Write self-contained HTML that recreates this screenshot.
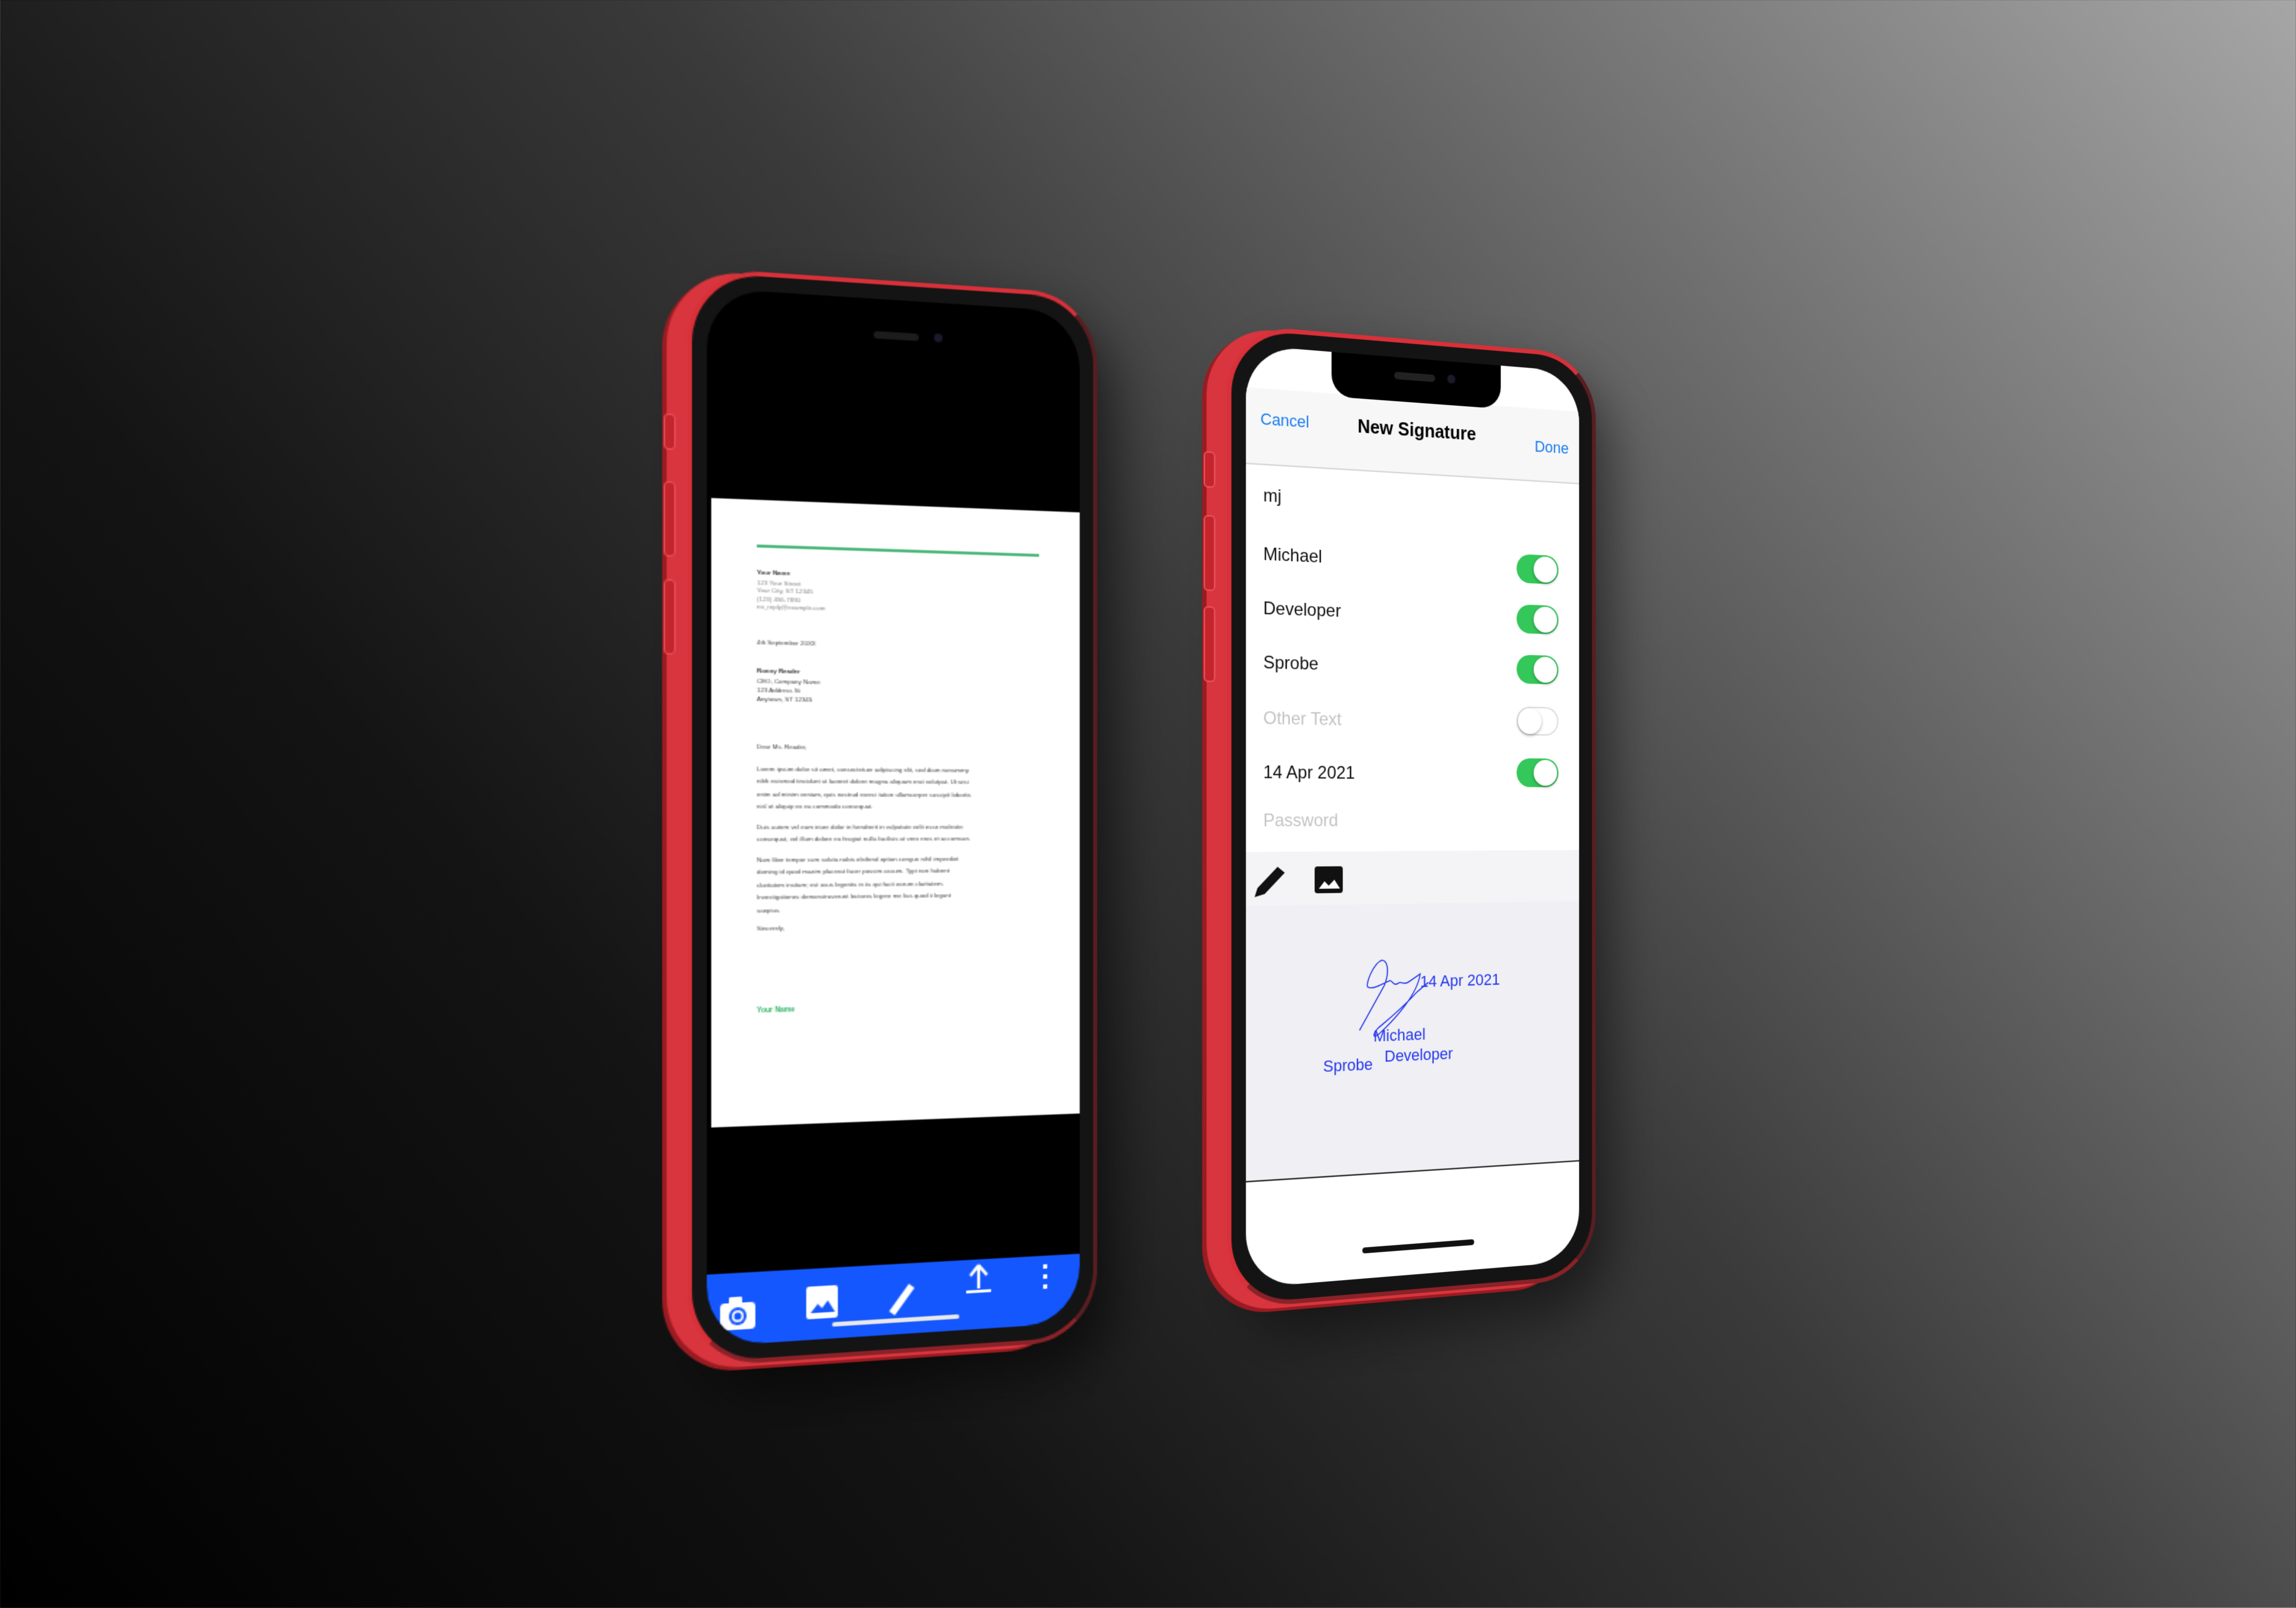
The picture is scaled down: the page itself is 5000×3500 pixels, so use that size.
<!DOCTYPE html>
<html><head><meta charset="utf-8">
<style>
html,body{margin:0;padding:0;width:5000px;height:3500px;overflow:hidden}
body{background:linear-gradient(50deg,#000 0%,#141414 30%,#3a3a3a 55%,#6a6a6a 75%,#a6a6a6 100%);font-family:"Liberation Sans",sans-serif}
#w{position:absolute;left:0;top:0;width:1568px;height:1098px;transform:scale(3.18878);transform-origin:0 0}
.phone{position:absolute;box-sizing:border-box;border:3px solid #d93039;border-right-color:#5a1d21;border-bottom-color:#8a2228;background:#141414;border-radius:50px;padding:10px}
.btn{position:absolute;left:-19px;width:6px;background:#c4242c;border-radius:3px;border:1px solid #e8505a}
.scr{position:relative;overflow:hidden;border-radius:40px;width:100%;height:100%}
.doc{position:absolute;left:3px;right:0;top:140px;height:420px;background:#fff}
.doc div{position:absolute;left:31px;font-size:4.4px;color:#444;line-height:6px;white-space:nowrap;font-family:"Liberation Sans",sans-serif}
.row{position:absolute;left:12px;font-size:12px;color:#111}
.tg{position:absolute;left:196px;width:32px;height:20px;border-radius:10px;background:#34c759}
.tg::after{content:"";position:absolute;right:1px;top:1px;width:18px;height:18px;border-radius:50%;background:#fff;box-shadow:0 1px 2px rgba(0,0,0,.3)}
.tg.off{background:#fff;box-shadow:inset 0 0 0 1px #ddd}
.tg.off::after{right:auto;left:1px}
.sig{position:absolute;color:#2436ee;font-size:11px;white-space:nowrap}
</style></head><body><div id="w">

<!-- LEFT PHONE -->
<div class="phone" style="left:468px;top:192px;width:290px;height:732px;transform:perspective(1500px) rotateY(15.4deg);box-shadow:-14px 2px 0 #d8353e,-17px 4px 0 #9a1b21,10px 20px 40px rgba(0,0,0,.6)">
 <div class="btn" style="top:95px;height:22px"></div>
 <div class="btn" style="top:140px;height:48px"></div>
 <div class="btn" style="top:205px;height:48px"></div>
 <div class="scr" style="background:#000">
  <div style="position:absolute;left:115px;top:22px;width:32px;height:5px;border-radius:3px;background:#1c1c1c"></div>
  <div style="position:absolute;left:158px;top:21px;width:6px;height:6px;border-radius:50%;background:#1a1a2a"></div>
  <div class="doc">
   <span style="position:absolute;left:31px;top:30px;width:200px;height:2px;background:#4cb87a"></span>
   <div style="top:46px;font-weight:bold;color:#333">Your Name</div>
   <div style="top:53px;color:#888;line-height:5.4px">123 Your Street<br>Your City, ST 12345<br>(123) 456-7890<br>no_reply@example.com</div>
   <div style="top:93px">4th September 20XX</div>
   <div style="top:112px;font-weight:bold;color:#333">Ronny Reader</div>
   <div style="top:119px;line-height:5.8px">CEO, Company Name<br>123 Address St<br>Anytown, ST 12345</div>
   <div style="top:163px">Dear Ms. Reader,</div>
   <div style="top:177px;line-height:8.4px">Lorem ipsum dolor sit amet, consectetuer adipiscing elit, sed diam nonummy<br>nibh euismod tincidunt ut laoreet dolore magna aliquam erat volutpat. Ut wisi<br>enim ad minim veniam, quis nostrud exerci tation ullamcorper suscipit lobortis<br>nisl ut aliquip ex ea commodo consequat.</div>
   <div style="top:216px;line-height:8.4px">Duis autem vel eum iriure dolor in hendrerit in vulputate velit esse molestie<br>consequat, vel illum dolore eu feugiat nulla facilisis at vero eros et accumsan.</div>
   <div style="top:238px;line-height:8.4px">Nam liber tempor cum soluta nobis eleifend option congue nihil imperdiet<br>doming id quod mazim placerat facer possim assum. Typi non habent<br>claritatem insitam; est usus legentis in iis qui facit eorum claritatem.<br>Investigationes demonstraverunt lectores legere me lius quod ii legunt<br>saepius.</div>
   <div style="top:285px">Sincerely,</div>
   <div style="top:340px;color:#2fb565;font-weight:bold;font-size:5px">Your Name</div>
  </div>
  <div style="position:absolute;left:0;right:0;top:658px;bottom:0;background:#1457ff">
   <svg width="264" height="48" style="position:absolute;left:0;top:0">
    <g fill="#fff">
     <rect x="9" y="20" width="24" height="18" rx="3"/><rect x="15" y="16" width="9" height="6" rx="1"/>
     <circle cx="21" cy="29" r="6" fill="#1457ff"/><circle cx="21" cy="29" r="4"/><circle cx="21" cy="29" r="2.5" fill="#1457ff"/>
     <rect x="68" y="12" width="22" height="22" rx="2"/>
     <path d="M71 30 L76 24 L79 27 L83 22 L88 30 Z" fill="#1457ff"/>
     <path d="M126 32 L140 14 L144 17 L130 35 Z"/>
     <path d="M190 4 L184 11 M190 4 L196 11 M190 4 L190 20 M181 22 L199 22" stroke="#fff" stroke-width="2.2" fill="none"/>
     <rect x="237" y="6" width="3" height="3"/><rect x="237" y="13" width="3" height="3"/><rect x="237" y="20" width="3" height="3"/>
     <rect x="86" y="37" width="90" height="3" rx="1.5" fill="#e8e8e8"/>
    </g>
   </svg>
  </div>
 </div>
</div>

<!-- RIGHT PHONE -->
<div class="phone" style="left:833px;top:232px;width:270px;height:651px;border-radius:46px;transform:perspective(1500px) rotateY(21.3deg);box-shadow:-14px 2px 0 #d8353e,-17px 4px 0 #9a1b21,10px 20px 40px rgba(0,0,0,.5)">
 <div class="btn" style="top:82px;height:22px"></div>
 <div class="btn" style="top:124px;height:48px"></div>
 <div class="btn" style="top:184px;height:48px"></div>
 <div class="scr" style="background:#fff;border-radius:36px">
  <div style="position:absolute;left:0;right:0;top:28px;height:50px;background:#f7f7f7;border-bottom:1px solid #d8d8d8"></div>
  <div style="position:absolute;left:60px;top:0;width:124px;height:30px;background:#000;border-radius:0 0 15px 15px"></div>
  <div style="position:absolute;left:105px;top:10px;width:30px;height:5px;border-radius:3px;background:#222"></div>
  <div style="position:absolute;left:144px;top:9px;width:6px;height:6px;border-radius:50%;background:#1a1a2a"></div>
  <div style="position:absolute;left:10px;top:43px;font-size:11px;color:#1a7cf0">Cancel</div>
  <div style="position:absolute;left:0;right:0;text-align:center;top:42px;font-size:12.5px;color:#000;font-weight:bold">New Signature</div>
  <div style="position:absolute;right:8px;top:49px;font-size:11px;color:#1a7cf0">Done</div>
  <div class="row" style="top:92px">mj</div>
  <div class="row" style="top:131px">Michael</div>
  <div class="row" style="top:167px">Developer</div>
  <div class="row" style="top:203px">Sprobe</div>
  <div class="row" style="top:240px;color:#c4c4c4">Other Text</div>
  <div class="row" style="top:276px">14 Apr 2021</div>
  <div class="row" style="top:308px;color:#c4c4c4">Password</div>
  <div class="tg" style="top:130px"></div>
  <div class="tg" style="top:165px"></div>
  <div class="tg" style="top:200px"></div>
  <div class="tg off" style="top:236px"></div>
  <div class="tg" style="top:272px"></div>
  <div style="position:absolute;left:0;right:0;top:336px;height:36px;background:#f4f4f6"></div>
  <svg width="80" height="36" style="position:absolute;left:0;top:336px">
   <path d="M6 30 L8 24 L22 10 L27 14 L13 28 Z" fill="#111"/>
   <rect x="48" y="10" width="20" height="18" rx="2" fill="#111"/>
   <path d="M51 25 L55 20 L58 23 L62 19 L66 25 Z" fill="#fff"/>
  </svg>
  <div style="position:absolute;left:0;right:0;top:372px;height:182px;background:#efeff4;border-bottom:1px solid #333"></div>
  <svg width="60" height="70" style="position:absolute;left:76px;top:402px">
   <path d="M4 55 L22 25 C26 15 24 8 20 8 C14 10 8 24 10 26 C14 28 20 24 26 22 C28 22 28 26 32 24 C34 22 36 26 40 23 L48 18 C46 32 30 48 18 58 C12 62 14 56 20 52 C28 46 36 40 46 30 L54 24" stroke="#2436ee" stroke-width="0.8" fill="none"/>
  </svg>
  <div class="sig" style="left:124px;top:420px">14 Apr 2021</div>
  <div class="sig" style="left:90px;top:456px">Michael</div>
  <div class="sig" style="left:98px;top:470px">Developer</div>
  <div class="sig" style="left:54px;top:475px">Sprobe</div>
  <div style="position:absolute;left:82px;top:604px;width:82px;height:4px;border-radius:2px;background:#111"></div>
 </div>
</div>

</div></body></html>
